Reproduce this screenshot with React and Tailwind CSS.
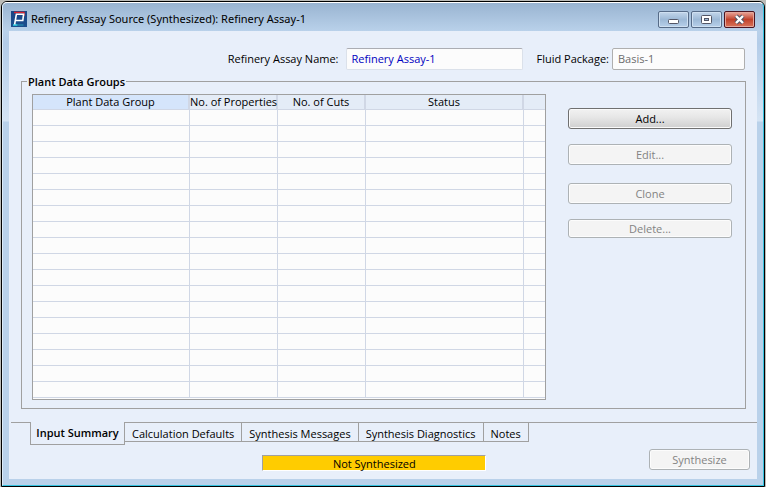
const columns = ["Plant Data Group", "No. of Properties", "No. of Cuts", "Status", ""];
const rows = Array.from({ length: 18 }, (_, i) => i);
const tabs = ["Calculation Defaults", "Synthesis Messages", "Synthesis Diagnostics", "Notes"];

const disabledButton =
  "w-full rounded-[3px] border border-[#adb2b5] bg-[#f4f4f4] text-[#838383] shadow-[inset_0_0_0_1px_#fcfcfc]";

function AppIcon() {
  return (
    <svg width="16" height="16" viewBox="0 0 16 16" aria-hidden="true">
      <defs>
        <linearGradient id="tile" x1="0" y1="0" x2="0" y2="1">
          <stop offset="0" stopColor="#1b4585" />
          <stop offset="1" stopColor="#1d4f8e" />
        </linearGradient>
      </defs>
      <rect width="16" height="16" fill="url(#tile)" />
      <path d="M3 1.5H13V5" fill="none" stroke="#d8232f" strokeWidth="1.4" />
      <path d="M2 14H6.5" fill="none" stroke="#2fd0e0" strokeWidth="1.6" />
      <path d="M6.5 14H12.5" fill="none" stroke="#2a9db8" strokeWidth="1" />
      <path d="M3.6 13.5L5.4 3.2H12.6L11.8 9.5H4.8" fill="none" stroke="#fff" strokeWidth="1.6" />
    </svg>
  );
}

function CaptionButton({ label, danger, children }) {
  return (
    <button
      type="button"
      aria-label={label}
      className={
        danger
          ? "flex h-[17px] w-[31px] items-center justify-center rounded-[2px] border border-[#4c1420] bg-linear-to-b from-[#e9a79c] from-0% via-[#c0412b] via-50% to-[#d9745a] shadow-[inset_0_0_0_1px_#e4a79c]"
          : "flex h-[17px] w-[31px] items-center justify-center rounded-[2px] border border-[#566b87] bg-linear-to-b from-[#c3d6ea] from-0% via-[#9db9d6] via-50% to-[#b7d0ea] shadow-[inset_0_0_0_1px_#cfe0f1]"
      }
    >
      <svg width="13" height="11" viewBox="0 0 13 11" aria-hidden="true">
        {children}
      </svg>
    </button>
  );
}

export default function App() {
  return (
    <div className="flex min-h-screen bg-[#bcbcb8] p-px font-['Open_Sans','Noto_Sans',sans-serif] text-[11px] leading-[16px] text-black">
      <main className="flex flex-1 flex-col rounded-t-[6px] border border-black bg-[#b9d1ea]">
        <div className="flex flex-1 flex-col rounded-t-[5px] border border-t-white border-r-[#35c3e0] border-b-[#35c3e0] border-l-[#dcebf8] bg-[linear-gradient(to_bottom,#99b4d1_0px,#b9d1ea_28px,#b3cce8_40px,#d5e4f4_118px,#b9d1ea_119px)] px-[6px] pb-[6px]">
          <header className="flex h-[28px] items-center gap-1 pt-1 pr-[2px] pl-[2px]">
            <AppIcon />
            <h1 className="flex-1 font-['Noto_Sans','Open_Sans',sans-serif]">Refinery Assay Source (Synthesized): Refinery Assay-1</h1>
            <div className="flex gap-[2px]">
              <CaptionButton label="Minimize">
                <rect x="1.5" y="5.5" width="10" height="4" rx="1" fill="#fff" stroke="#535666" />
              </CaptionButton>
              <CaptionButton label="Maximize">
                <rect x="1.5" y="1.5" width="10" height="8" rx="1" fill="#fff" stroke="#535666" />
                <rect x="4.5" y="4.5" width="4" height="2" fill="#9db9d6" stroke="#535666" />
              </CaptionButton>
              <CaptionButton label="Close" danger>
                <path d="M3 2L10 9M10 2L3 9" stroke="#535666" strokeWidth="4.4" />
                <path d="M3 2L10 9M10 2L3 9" stroke="#fff" strokeWidth="2.4" />
              </CaptionButton>
            </div>
          </header>

          <section className="flex flex-1 flex-col bg-[#e8effa] pb-2">
            <div className="flex items-center justify-end pt-[17px] pr-3">
              <label htmlFor="assay-name" className="mr-[7px]">Refinery Assay Name:</label>
              <input
                id="assay-name"
                defaultValue="Refinery Assay-1"
                className="h-[22px] w-[177px] rounded-[2px] border border-[#dbe1ea] border-t-[#abadb3] bg-[#fcfcfc] px-[5px] pb-[2px] text-[#0000c0]"
              />
              <label htmlFor="fluid-package" className="mr-[3px] ml-[14px]">Fluid Package:</label>
              <input
                id="fluid-package"
                readOnly
                value="Basis-1"
                className="h-[22px] w-[133px] rounded-[2px] border border-[#afafaf] bg-[#fcfcfc] px-[5px] pb-[2px] text-[#6d6d6d]"
              />
            </div>

            <fieldset className="mx-3 mt-1 mr-[11px] flex flex-1 flex-col border border-[#a0a0a0] pr-[13px] pb-2 pl-[10px]">
              <legend className="-ml-[5px] px-px leading-[15px] font-semibold">Plant Data Groups</legend>
              <div className="flex items-start gap-[22px] pt-[5px]">
                <div className="flex-1 border border-[#a0a0a0] bg-[#fcfcfc] pb-px">
                  <table className="w-full table-fixed border-separate border-spacing-0">
                    <colgroup>
                      <col className="w-[157px]" />
                      <col className="w-[88px]" />
                      <col className="w-[88px]" />
                      <col className="w-[158px]" />
                      <col />
                    </colgroup>
                    <thead>
                      <tr className="h-[15px]">
                        {columns.map((c, i) => (
                          <th
                            key={i}
                            scope="col"
                            className={
                              "h-[15px] overflow-visible border-b border-[#d0d7e5] p-0 leading-[14px] font-normal whitespace-nowrap " +
                              (i === 0 ? "border-r-2 bg-[#d5e5fb]" : i === 4 ? "bg-[#e4ecf7]" : "border-r-2 bg-[#e4ecf7]")
                            }
                          >
                            {c}
                          </th>
                        ))}
                      </tr>
                    </thead>
                    <tbody>
                      {rows.map((r) => (
                        <tr key={r}>
                          {columns.map((_, i) => (
                            <td
                              key={i}
                              className={"h-[16px] border-b border-[#d0d7e5] p-0 " + (i < 4 ? "border-r" : "")}
                            />
                          ))}
                        </tr>
                      ))}
                    </tbody>
                  </table>
                </div>

                <div className="flex w-[164px] flex-col pt-[14px]">
                  <button
                    type="button"
                    className="h-[21px] w-full rounded-[3px] border border-[#707070] bg-linear-to-b from-[#f2f2f2] from-0% via-[#e6e6e6] via-45% to-[#cfcfcf] shadow-[inset_0_0_0_1px_#fafafa]"
                  >
                    Add...
                  </button>
                  <button type="button" disabled className={disabledButton + " mt-[15px] h-[21px]"}>Edit...</button>
                  <button type="button" disabled className={disabledButton + " mt-[18px] h-[21px]"}>Clone</button>
                  <button type="button" disabled className={disabledButton + " mt-[15px] h-[19px]"}>Delete...</button>
                </div>
              </div>
            </fieldset>

            <nav className="mt-[13px] flex items-start pl-[2px]">
              <div className="w-[19px] border-t border-[#a0a0a0]" />
              <button type="button" className="h-[23px] w-[95px] border-x border-b border-[#a0a0a0] font-semibold whitespace-nowrap">
                Input Summary
              </button>
              {tabs.map((t) => (
                <button
                  key={t}
                  type="button"
                  className="h-[20px] border-t border-r border-b border-[#a0a0a0] px-[7px] pt-[3px] leading-[15px] whitespace-nowrap"
                >
                  {t}
                </button>
              ))}
              <div className="flex-1 border-t border-[#a0a0a0]" />
            </nav>

            <div className="mt-1 grid grid-cols-[49fr_224px_51fr] items-start pr-[7px]">
              <div />
              <output className="mt-[6px] h-[16px] border border-t-[#a0a0a0] border-r-white border-b-white border-l-[#a0a0a0] bg-[#ffcc00] text-center leading-[15px]">
                Not Synthesized
              </output>
              <button type="button" disabled className="h-[21px] w-[101px] justify-self-end rounded-[3px] border border-[#adb2b5] bg-[#f4f4f4] text-[#838383] shadow-[inset_0_0_0_1px_#fcfcfc]">
                Synthesize
              </button>
            </div>
          </section>
        </div>
      </main>
    </div>
  );
}
